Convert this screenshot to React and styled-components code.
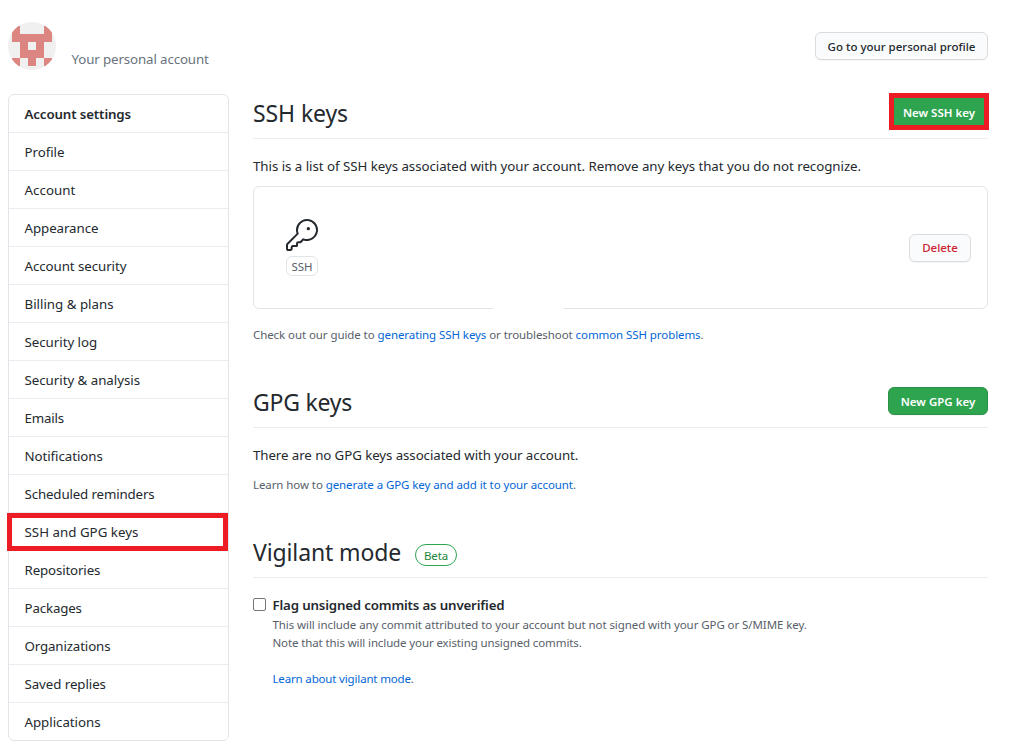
import React from "react";
import styled, { createGlobalStyle } from "styled-components";

const Global = createGlobalStyle`
  * { box-sizing: border-box; }
  body { margin: 0; background: #fff; color: #24292e; font: 13.3px/21px "Noto Sans", "Open Sans", sans-serif; }
  h2, p { margin: 0; font-weight: 400; }
`;
const Page = styled.div`width: 1009px; height: 748px; padding: 22px 21px 0 8px; overflow: hidden;`;
const Header = styled.header`display: flex; height: 72px; align-items: flex-start;`;
const Avatar = styled.svg`width: 48px; height: 48px; flex: none;`;
const AccountKind = styled.span`
  margin: 27px auto 0 15.5px; color: #6a737d; white-space: nowrap; letter-spacing: -0.12px;
`;
const Columns = styled.div`display: flex; gap: 24px; align-items: flex-start;`;
const Sidebar = styled.nav`width: 221px; flex: none; border: 1px solid #e1e4e8; border-radius: 6px;`;
const NavItem = styled.a`
  display: block; position: relative; height: ${(p) => (p.$last ? 37 : 38)}px; padding: 9px 16px 0 15.5px; color: #24292e; white-space: nowrap;
  border-bottom: ${(p) => (p.$last ? 0 : 1)}px solid #eaecef;
  font-weight: ${(p) => (p.$heading ? 600 : 400)};
  letter-spacing: ${(p) => p.$ls ?? -0.07}px;
  ${(p) => p.$marked && `&::after { content: ""; position: absolute; inset: 0 0 -1px -2px; border: 5px solid #ed1c24; }`}
`;
const Main = styled.main`width: 735px; flex: none;`;
const SectionHead = styled.div`
  display: flex; align-items: flex-start; height: 45px; margin-top: ${(p) => p.$top || 0}px;
  border-bottom: 1px solid #eaecef;
`;
const Title = styled.h2`font-size: 23px; line-height: 36px; margin-top: 1px; white-space: nowrap; letter-spacing: ${(p) => p.$ls || 0}px;`;
const Button = styled.button`
  height: 28px; width: ${(p) => p.$w}px; margin: ${(p) => p.$top || 0}px 0 0 auto; padding: 1px 0 0;
  font: ${(p) => (p.$green ? 600 : 500)} 11.5px/18px "Noto Sans", "Open Sans", sans-serif; letter-spacing: ${(p) => p.$ls || 0}px;
  white-space: nowrap; border-radius: 6px; flex: none;
  color: ${(p) => (p.$green ? "#fff" : p.$danger ? "#cb2431" : "#24292e")};
  background: ${(p) => (p.$green ? "#2ea44f" : "#fafbfc")};
  border: 1px solid ${(p) => (p.$green ? "#2a9147" : "#d9dbdd")};
  box-shadow: 0 1px 0 rgba(27, 31, 35, 0.04);
`;
const MarkedButton = styled(Button)`
  height: 37px; margin: -1px -1px 0 auto; border: 5px solid #ed1c24; border-radius: 0; box-shadow: none;
  padding-top: 2px;
`;
const Text = styled.p`margin-top: ${(p) => p.$top}px; white-space: nowrap; letter-spacing: ${(p) => p.$ls || 0}px;`;
const Small = styled(Text)`font-size: 11.5px; line-height: 18px; color: #586069;`;
const Link = styled.a`color: #0366d6;`;
const KeyBox = styled.div`
  position: relative; display: flex; align-items: center; height: 123px; margin-top: 9px; padding: 0 16px 0 32px;
  border: 1px solid #e1e4e8; border-radius: 6px;
  &::after { content: ""; position: absolute; left: 239px; bottom: -1px; width: 71px; height: 1px; background: #fff; }
`;
const KeyKind = styled.div`display: flex; flex-direction: column; align-items: center; width: 32px; gap: 5px;`;
const KeyLabel = styled.span`
  width: 32px; height: 20px; padding-top: 1px; border: 1px solid #e1e4e8; border-radius: 6px; text-align: center;
  font-size: 11.5px; line-height: 18px; color: #586069;
`;
const Beta = styled.span`
  width: 42px; height: 22px; padding-top: 1px; margin: 11px 0 0 auto; border: 1px solid #2ea44f; border-radius: 11px;
  color: #22863a; text-align: center; font-size: 11.5px; line-height: 20px; letter-spacing: -0.1px;
`;
const TitleGroup = styled.div`display: flex; width: 204px;`;
const Option = styled.div`display: flex; margin-top: 17px; gap: 6.5px;`;
const Checkbox = styled.input`
  appearance: none; width: 13px; height: 13px; margin: 3px 0 0; border: 1px solid #767676; border-radius: 2px; background: #fff; flex: none;
`;
const OptionLabel = styled.label`display: block; font-weight: 600; white-space: nowrap; letter-spacing: -0.17px;`;

const items = [
  ["Profile", -0.05], ["Account", 0.05], ["Appearance", -0.07], ["Account security", -0.07],
  ["Billing & plans", 0], ["Security log", -0.03], ["Security & analysis", -0.03], ["Emails", -0.2],
  ["Notifications", -0.07], ["Scheduled reminders", -0.14], ["SSH and GPG keys", 0.02], ["Repositories", -0.14],
  ["Packages", -0.15], ["Organizations", -0.13], ["Saved replies", -0.07], ["Applications", -0.03],
];

const KeyIcon = () => (
  <svg width="32" height="32" viewBox="0 0 24 24" fill="#24292e">
    <path d="M16.75 8.5a1.25 1.25 0 100-2.5 1.25 1.25 0 000 2.5z" />
    <path fillRule="evenodd" d="M15.75 0a8.25 8.25 0 00-7.851 10.79L.513 18.178A1.75 1.75 0 000 19.414v2.836C0 23.217.784 24 1.75 24h1.5A1.75 1.75 0 005 22.25v-1a.25.25 0 01.25-.25h2.735a.75.75 0 00.545-.22l.214-.213A.875.875 0 009 19.948V18.5a.25.25 0 01.25-.25h1.086c.464 0 .91-.184 1.237-.513l1.636-1.636A8.25 8.25 0 1015.75 0zM9 8.25a6.75 6.75 0 114.288 6.287.75.75 0 00-.804.168l-1.971 1.972a.25.25 0 01-.177.073H9.25A1.75 1.75 0 007.5 18.5v1H5.25a1.75 1.75 0 00-1.75 1.75v1a.25.25 0 01-.25.25h-1.5a.25.25 0 01-.25-.25v-2.836a.25.25 0 01.073-.177l7.722-7.721a.75.75 0 00.168-.804A6.73 6.73 0 019 8.25z" />
  </svg>
);

export default function App() {
  return (
    <Page>
      <Global />
      <Header>
        <Avatar viewBox="0 0 48 48">
          <defs><clipPath id="disc"><circle cx="24" cy="24" r="24" /></clipPath></defs>
          <g clipPath="url(#disc)">
            <rect width="48" height="48" fill="#f0f0f0" />
            <path fillRule="evenodd" fill="#dd8581" d="M4 4h8v8h24V4h8v16h-8v16h8v8h-8v-8h-8v8h-8v-8h-8v8H4v-8h8V20H4zM20 20v8h8v-8z" />
          </g>
        </Avatar>
        <AccountKind>Your personal account</AccountKind>
        <Button $w={173} $top={10}>Go to your personal profile</Button>
      </Header>
      <Columns>
        <Sidebar>
          <NavItem $heading $ls={-0.13}>Account settings</NavItem>
          {items.map(([name, spacing], i) => (
            <NavItem key={name} $ls={spacing} $marked={name === "SSH and GPG keys"} $last={i === items.length - 1}>{name}</NavItem>
          ))}
        </Sidebar>
        <Main>
          <SectionHead>
            <Title $ls={-0.1}>SSH keys</Title>
            <MarkedButton $green $w={100}>New SSH key</MarkedButton>
          </SectionHead>
          <Text $top={17} $ls={-0.04}>This is a list of SSH keys associated with your account. Remove any keys that you do not recognize.</Text>
          <KeyBox>
            <KeyKind><KeyIcon /><KeyLabel>SSH</KeyLabel></KeyKind>
            <Button $danger $w={62}>Delete</Button>
          </KeyBox>
          <Small $top={17} $ls={-0.08}>Check out our guide to <Link>generating SSH keys</Link> or troubleshoot <Link>common SSH problems</Link>.</Small>
          <SectionHead $top={39}>
            <Title $ls={-0.25}>GPG keys</Title>
            <Button $green $w={100} $top={4}>New GPG key</Button>
          </SectionHead>
          <Text $top={17} $ls={-0.08}>There are no GPG keys associated with your account.</Text>
          <Small $top={10} $ls={-0.085}>Learn how to <Link>generate a GPG key and add it to your account</Link>.</Small>
          <SectionHead $top={39}>
            <TitleGroup>
              <Title $ls={-0.12}>Vigilant mode</Title>
              <Beta>Beta</Beta>
            </TitleGroup>
          </SectionHead>
          <Option>
            <Checkbox type="checkbox" id="vigilant" />
            <div>
              <OptionLabel htmlFor="vigilant">Flag unsigned commits as unverified</OptionLabel>
              <Small $top={0} $ls={-0.08}>This will include any commit attributed to your account but not signed with your GPG or S/MIME key.</Small>
              <Small $top={0} $ls={-0.115}>Note that this will include your existing unsigned commits.</Small>
              <Small $top={18} $ls={-0.16}><Link>Learn about vigilant mode</Link>.</Small>
            </div>
          </Option>
        </Main>
      </Columns>
    </Page>
  );
}
